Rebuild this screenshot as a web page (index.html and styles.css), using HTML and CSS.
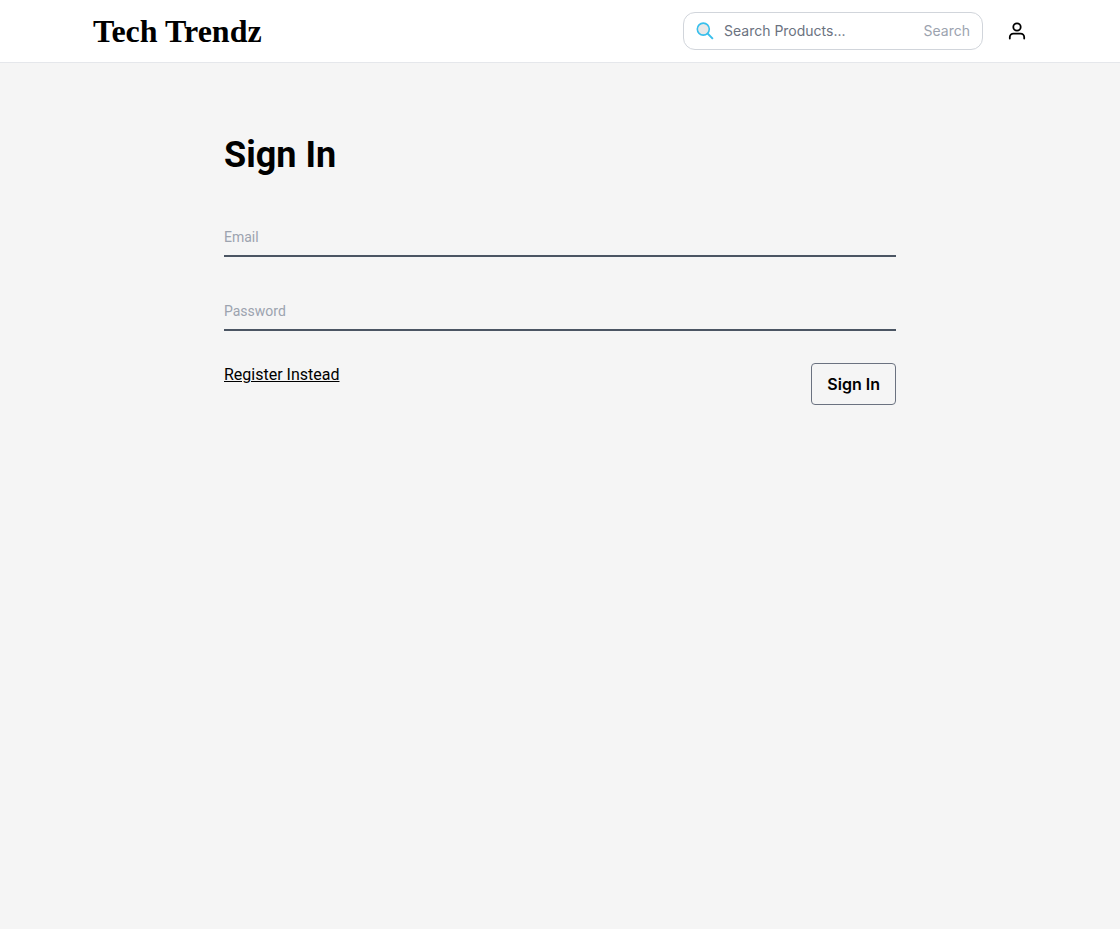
FILE: index.html
```html
<!DOCTYPE html>
<html lang="en">
<head>
<meta charset="utf-8">
<meta name="viewport" content="width=device-width, initial-scale=1">
<title>Tech Trendz</title>
<link rel="stylesheet" href="styles.css">
</head>
<body>
<header class="header">
  <a class="brand" href="#">Tech Trendz</a>
  <div class="actions">
    <form class="search" role="search">
      <svg class="search-icon" viewBox="0 0 18 18" fill="none" aria-hidden="true">
        <circle cx="7.3" cy="7.1" r="6" fill="#e8e8e8" stroke="#38bfec" stroke-width="1.6"/>
        <path d="M11.6 11.5l5.3 5.3" stroke="#38bfec" stroke-width="1.9"/>
      </svg>
      <input class="search-input" type="search" placeholder="Search Products..." aria-label="Search products">
      <button class="search-button" type="submit">Search</button>
    </form>
    <a class="account" href="#" aria-label="Account">
      <svg class="account-icon" viewBox="0 0 20 20" fill="none" stroke="#000" stroke-width="1.8" stroke-linecap="round" stroke-linejoin="round">
        <circle cx="10" cy="6" r="3.7"/>
        <path d="M2.8 17.6v-1.4a3.6 3.6 0 0 1 3.6-3.6h7.2a3.6 3.6 0 0 1 3.6 3.6v1.4"/>
      </svg>
    </a>
  </div>
</header>
<main class="page">
  <h1 class="title">Sign In</h1>
  <form class="form">
    <input class="field" type="email" placeholder="Email" aria-label="Email">
    <input class="field" type="password" placeholder="Password" aria-label="Password">
    <div class="form-footer">
      <a class="register" href="#">Register Instead</a>
      <button class="submit" type="submit">Sign In</button>
    </div>
  </form>
</main>
</body>
</html>
```
FILE: styles.css
```css
* {
  box-sizing: border-box;
}

body {
  margin: 0;
  background: #f5f5f5;
  color: #000;
  font-family: Roboto, "Liberation Sans", sans-serif;
  font-size: 16px;
  line-height: 24px;
}

input,
button {
  font: inherit;
  border: 0;
  background: none;
  padding: 0;
  outline: none;
}

.header {
  display: flex;
  align-items: center;
  justify-content: space-between;
  padding: 12px 93px;
  background: #fff;
  border-bottom: 1px solid #e5e7eb;
}

.brand {
  color: #000;
  font-family: "Liberation Serif", serif;
  font-size: 32px;
  font-weight: 700;
  line-height: 36px;
  text-decoration: none;
}

.actions {
  display: flex;
  align-items: center;
  gap: 24px;
}

.search {
  display: flex;
  align-items: center;
  width: 300px;
  height: 38px;
  padding: 0 12px;
  border: 1px solid #d1d5db;
  border-radius: 12px;
  font-family: Inter, Roboto, sans-serif;
  font-size: 14px;
  line-height: 20px;
}

.search-icon {
  flex: none;
  width: 18px;
  height: 18px;
  margin-right: 10px;
}

.search-input {
  flex: 1;
  min-width: 0;
}

.search-input::placeholder {
  color: #6b7280;
  opacity: 1;
}

.search-button {
  color: #9ca3af;
}

.account {
  display: flex;
}

.account-icon {
  width: 20px;
  height: 20px;
}

.page {
  width: 60%;
  margin: 0 auto;
  padding-top: 72px;
}

.title {
  margin: 0;
  font-size: 36px;
  font-weight: 700;
  line-height: 40px;
}

.form {
  display: flex;
  flex-direction: column;
  gap: 32px;
  padding-top: 40px;
}

.field {
  width: 100%;
  height: 42px;
  padding-top: 4px;
  border-bottom: 2px solid #4b5563;
  font-size: 14px;
  line-height: 20px;
}

.field::placeholder {
  color: #9ca3af;
  opacity: 1;
}

.form-footer {
  display: flex;
  align-items: flex-start;
  justify-content: space-between;
}

.register {
  color: #000;
  text-decoration: underline;
}

.submit {
  padding: 8px 15px;
  border: 1px solid #6b7280;
  border-radius: 4px;
  color: #000;
  font-family: Inter, Roboto, sans-serif;
  font-weight: 600;
}
```
